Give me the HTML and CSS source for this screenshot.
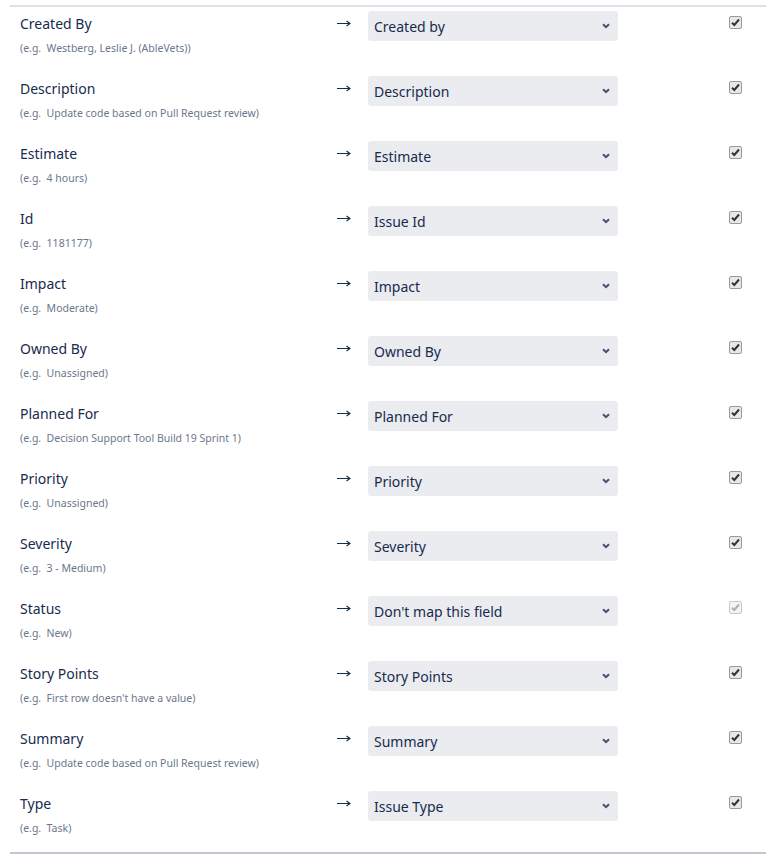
FILE: index.html
```html
<!DOCTYPE html>
<html>
<head>
<meta charset="utf-8">
<link rel="stylesheet" href="styles.css">
</head>
<body>
<div class="mapping">
  <div class="row">
    <div class="field"><div class="name">Created By</div><div class="example">(e.g.&nbsp; Westberg, Leslie J. (AbleVets))</div></div>
    <div class="arrow"><svg width="14" height="7" viewBox="0 0 14 7"><path d="M0 3.5 H12.5 M9.5 1 L13 3.5 L9.5 6" fill="none" stroke="#172b4d" stroke-width="1.1"/></svg></div>
    <div class="sel"><span>Created by</span><svg class="chev" width="8" height="6" viewBox="0 0 8 6"><path d="M1 1.2 L4 4.2 L7 1.2" fill="none" stroke="#42526e" stroke-width="2"/></svg></div>
    <div class="chk"><svg width="13" height="13" viewBox="0 0 13 13"><rect x="0.5" y="0.5" width="12" height="12" rx="1.5" fill="#e8e8e8" stroke="#9a9a9a"/><path d="M3 6.8 L5.3 9 L10 3.5" fill="none" stroke="#333" stroke-width="2"/></svg></div>
  </div>
  <div class="row">
    <div class="field"><div class="name">Description</div><div class="example">(e.g.&nbsp; Update code based on Pull Request review)</div></div>
    <div class="arrow"><svg width="14" height="7" viewBox="0 0 14 7"><path d="M0 3.5 H12.5 M9.5 1 L13 3.5 L9.5 6" fill="none" stroke="#172b4d" stroke-width="1.1"/></svg></div>
    <div class="sel"><span>Description</span><svg class="chev" width="8" height="6" viewBox="0 0 8 6"><path d="M1 1.2 L4 4.2 L7 1.2" fill="none" stroke="#42526e" stroke-width="2"/></svg></div>
    <div class="chk"><svg width="13" height="13" viewBox="0 0 13 13"><rect x="0.5" y="0.5" width="12" height="12" rx="1.5" fill="#e8e8e8" stroke="#9a9a9a"/><path d="M3 6.8 L5.3 9 L10 3.5" fill="none" stroke="#333" stroke-width="2"/></svg></div>
  </div>
  <div class="row">
    <div class="field"><div class="name">Estimate</div><div class="example">(e.g.&nbsp; 4 hours)</div></div>
    <div class="arrow"><svg width="14" height="7" viewBox="0 0 14 7"><path d="M0 3.5 H12.5 M9.5 1 L13 3.5 L9.5 6" fill="none" stroke="#172b4d" stroke-width="1.1"/></svg></div>
    <div class="sel"><span>Estimate</span><svg class="chev" width="8" height="6" viewBox="0 0 8 6"><path d="M1 1.2 L4 4.2 L7 1.2" fill="none" stroke="#42526e" stroke-width="2"/></svg></div>
    <div class="chk"><svg width="13" height="13" viewBox="0 0 13 13"><rect x="0.5" y="0.5" width="12" height="12" rx="1.5" fill="#e8e8e8" stroke="#9a9a9a"/><path d="M3 6.8 L5.3 9 L10 3.5" fill="none" stroke="#333" stroke-width="2"/></svg></div>
  </div>
  <div class="row">
    <div class="field"><div class="name">Id</div><div class="example">(e.g.&nbsp; 1181177)</div></div>
    <div class="arrow"><svg width="14" height="7" viewBox="0 0 14 7"><path d="M0 3.5 H12.5 M9.5 1 L13 3.5 L9.5 6" fill="none" stroke="#172b4d" stroke-width="1.1"/></svg></div>
    <div class="sel"><span>Issue Id</span><svg class="chev" width="8" height="6" viewBox="0 0 8 6"><path d="M1 1.2 L4 4.2 L7 1.2" fill="none" stroke="#42526e" stroke-width="2"/></svg></div>
    <div class="chk"><svg width="13" height="13" viewBox="0 0 13 13"><rect x="0.5" y="0.5" width="12" height="12" rx="1.5" fill="#e8e8e8" stroke="#9a9a9a"/><path d="M3 6.8 L5.3 9 L10 3.5" fill="none" stroke="#333" stroke-width="2"/></svg></div>
  </div>
  <div class="row">
    <div class="field"><div class="name">Impact</div><div class="example">(e.g.&nbsp; Moderate)</div></div>
    <div class="arrow"><svg width="14" height="7" viewBox="0 0 14 7"><path d="M0 3.5 H12.5 M9.5 1 L13 3.5 L9.5 6" fill="none" stroke="#172b4d" stroke-width="1.1"/></svg></div>
    <div class="sel"><span>Impact</span><svg class="chev" width="8" height="6" viewBox="0 0 8 6"><path d="M1 1.2 L4 4.2 L7 1.2" fill="none" stroke="#42526e" stroke-width="2"/></svg></div>
    <div class="chk"><svg width="13" height="13" viewBox="0 0 13 13"><rect x="0.5" y="0.5" width="12" height="12" rx="1.5" fill="#e8e8e8" stroke="#9a9a9a"/><path d="M3 6.8 L5.3 9 L10 3.5" fill="none" stroke="#333" stroke-width="2"/></svg></div>
  </div>
  <div class="row">
    <div class="field"><div class="name">Owned By</div><div class="example">(e.g.&nbsp; Unassigned)</div></div>
    <div class="arrow"><svg width="14" height="7" viewBox="0 0 14 7"><path d="M0 3.5 H12.5 M9.5 1 L13 3.5 L9.5 6" fill="none" stroke="#172b4d" stroke-width="1.1"/></svg></div>
    <div class="sel"><span>Owned By</span><svg class="chev" width="8" height="6" viewBox="0 0 8 6"><path d="M1 1.2 L4 4.2 L7 1.2" fill="none" stroke="#42526e" stroke-width="2"/></svg></div>
    <div class="chk"><svg width="13" height="13" viewBox="0 0 13 13"><rect x="0.5" y="0.5" width="12" height="12" rx="1.5" fill="#e8e8e8" stroke="#9a9a9a"/><path d="M3 6.8 L5.3 9 L10 3.5" fill="none" stroke="#333" stroke-width="2"/></svg></div>
  </div>
  <div class="row">
    <div class="field"><div class="name">Planned For</div><div class="example">(e.g.&nbsp; Decision Support Tool Build 19 Sprint 1)</div></div>
    <div class="arrow"><svg width="14" height="7" viewBox="0 0 14 7"><path d="M0 3.5 H12.5 M9.5 1 L13 3.5 L9.5 6" fill="none" stroke="#172b4d" stroke-width="1.1"/></svg></div>
    <div class="sel"><span>Planned For</span><svg class="chev" width="8" height="6" viewBox="0 0 8 6"><path d="M1 1.2 L4 4.2 L7 1.2" fill="none" stroke="#42526e" stroke-width="2"/></svg></div>
    <div class="chk"><svg width="13" height="13" viewBox="0 0 13 13"><rect x="0.5" y="0.5" width="12" height="12" rx="1.5" fill="#e8e8e8" stroke="#9a9a9a"/><path d="M3 6.8 L5.3 9 L10 3.5" fill="none" stroke="#333" stroke-width="2"/></svg></div>
  </div>
  <div class="row">
    <div class="field"><div class="name">Priority</div><div class="example">(e.g.&nbsp; Unassigned)</div></div>
    <div class="arrow"><svg width="14" height="7" viewBox="0 0 14 7"><path d="M0 3.5 H12.5 M9.5 1 L13 3.5 L9.5 6" fill="none" stroke="#172b4d" stroke-width="1.1"/></svg></div>
    <div class="sel"><span>Priority</span><svg class="chev" width="8" height="6" viewBox="0 0 8 6"><path d="M1 1.2 L4 4.2 L7 1.2" fill="none" stroke="#42526e" stroke-width="2"/></svg></div>
    <div class="chk"><svg width="13" height="13" viewBox="0 0 13 13"><rect x="0.5" y="0.5" width="12" height="12" rx="1.5" fill="#e8e8e8" stroke="#9a9a9a"/><path d="M3 6.8 L5.3 9 L10 3.5" fill="none" stroke="#333" stroke-width="2"/></svg></div>
  </div>
  <div class="row">
    <div class="field"><div class="name">Severity</div><div class="example">(e.g.&nbsp; 3 - Medium)</div></div>
    <div class="arrow"><svg width="14" height="7" viewBox="0 0 14 7"><path d="M0 3.5 H12.5 M9.5 1 L13 3.5 L9.5 6" fill="none" stroke="#172b4d" stroke-width="1.1"/></svg></div>
    <div class="sel"><span>Severity</span><svg class="chev" width="8" height="6" viewBox="0 0 8 6"><path d="M1 1.2 L4 4.2 L7 1.2" fill="none" stroke="#42526e" stroke-width="2"/></svg></div>
    <div class="chk"><svg width="13" height="13" viewBox="0 0 13 13"><rect x="0.5" y="0.5" width="12" height="12" rx="1.5" fill="#e8e8e8" stroke="#9a9a9a"/><path d="M3 6.8 L5.3 9 L10 3.5" fill="none" stroke="#333" stroke-width="2"/></svg></div>
  </div>
  <div class="row">
    <div class="field"><div class="name">Status</div><div class="example">(e.g.&nbsp; New)</div></div>
    <div class="arrow"><svg width="14" height="7" viewBox="0 0 14 7"><path d="M0 3.5 H12.5 M9.5 1 L13 3.5 L9.5 6" fill="none" stroke="#172b4d" stroke-width="1.1"/></svg></div>
    <div class="sel"><span>Don't map this field</span><svg class="chev" width="8" height="6" viewBox="0 0 8 6"><path d="M1 1.2 L4 4.2 L7 1.2" fill="none" stroke="#42526e" stroke-width="2"/></svg></div>
    <div class="chk"><svg width="13" height="13" viewBox="0 0 13 13"><rect x="0.5" y="0.5" width="12" height="12" rx="1.5" fill="#f4f4f4" stroke="#c8c8c8"/><path d="M3 6.8 L5.3 9 L10 3.5" fill="none" stroke="#b0b0b0" stroke-width="2"/></svg></div>
  </div>
  <div class="row">
    <div class="field"><div class="name">Story Points</div><div class="example">(e.g.&nbsp; First row doesn't have a value)</div></div>
    <div class="arrow"><svg width="14" height="7" viewBox="0 0 14 7"><path d="M0 3.5 H12.5 M9.5 1 L13 3.5 L9.5 6" fill="none" stroke="#172b4d" stroke-width="1.1"/></svg></div>
    <div class="sel"><span>Story Points</span><svg class="chev" width="8" height="6" viewBox="0 0 8 6"><path d="M1 1.2 L4 4.2 L7 1.2" fill="none" stroke="#42526e" stroke-width="2"/></svg></div>
    <div class="chk"><svg width="13" height="13" viewBox="0 0 13 13"><rect x="0.5" y="0.5" width="12" height="12" rx="1.5" fill="#e8e8e8" stroke="#9a9a9a"/><path d="M3 6.8 L5.3 9 L10 3.5" fill="none" stroke="#333" stroke-width="2"/></svg></div>
  </div>
  <div class="row">
    <div class="field"><div class="name">Summary</div><div class="example">(e.g.&nbsp; Update code based on Pull Request review)</div></div>
    <div class="arrow"><svg width="14" height="7" viewBox="0 0 14 7"><path d="M0 3.5 H12.5 M9.5 1 L13 3.5 L9.5 6" fill="none" stroke="#172b4d" stroke-width="1.1"/></svg></div>
    <div class="sel"><span>Summary</span><svg class="chev" width="8" height="6" viewBox="0 0 8 6"><path d="M1 1.2 L4 4.2 L7 1.2" fill="none" stroke="#42526e" stroke-width="2"/></svg></div>
    <div class="chk"><svg width="13" height="13" viewBox="0 0 13 13"><rect x="0.5" y="0.5" width="12" height="12" rx="1.5" fill="#e8e8e8" stroke="#9a9a9a"/><path d="M3 6.8 L5.3 9 L10 3.5" fill="none" stroke="#333" stroke-width="2"/></svg></div>
  </div>
  <div class="row">
    <div class="field"><div class="name">Type</div><div class="example">(e.g.&nbsp; Task)</div></div>
    <div class="arrow"><svg width="14" height="7" viewBox="0 0 14 7"><path d="M0 3.5 H12.5 M9.5 1 L13 3.5 L9.5 6" fill="none" stroke="#172b4d" stroke-width="1.1"/></svg></div>
    <div class="sel"><span>Issue Type</span><svg class="chev" width="8" height="6" viewBox="0 0 8 6"><path d="M1 1.2 L4 4.2 L7 1.2" fill="none" stroke="#42526e" stroke-width="2"/></svg></div>
    <div class="chk"><svg width="13" height="13" viewBox="0 0 13 13"><rect x="0.5" y="0.5" width="12" height="12" rx="1.5" fill="#e8e8e8" stroke="#9a9a9a"/><path d="M3 6.8 L5.3 9 L10 3.5" fill="none" stroke="#333" stroke-width="2"/></svg></div>
  </div>
</div>
</body>
</html>
```
FILE: styles.css
```css
html, body {
  margin: 0;
  padding: 0;
  background: #fff;
}
body {
  padding: 5px 0 0 10px;
  font-family: "Noto Sans", "Open Sans", sans-serif;
  color: #172b4d;
}
.mapping {
  border-top: 2px solid #dfe1e6;
  border-bottom: 2px solid #c1c7d0;
}
.row {
  display: flex;
  align-items: flex-start;
  height: 65px;
  box-sizing: border-box;
  padding-left: 10px;
}
.field {
  width: 317px;
  padding-top: 7px;
}
.name {
  font-size: 14px;
  line-height: 20px;
  color: #172b4d;
}
.example {
  margin-top: 6px;
  font-size: 10.5px;
  line-height: 16px;
  color: #6b778c;
}
.arrow {
  width: 31px;
  padding-top: 13px;
  line-height: 0;
}
.sel {
  position: relative;
  margin-top: 4px;
  width: 250px;
  height: 30px;
  box-sizing: border-box;
  padding: 0 6px;
  background: #ebecf0;
  border-radius: 3px;
  display: flex;
  align-items: center;
  font-size: 14px;
  color: #172b4d;
}
.chev {
  position: absolute;
  right: 8px;
  top: 12px;
}
.chk {
  margin-left: 111px;
  padding-top: 9px;
  line-height: 0;
}
```
